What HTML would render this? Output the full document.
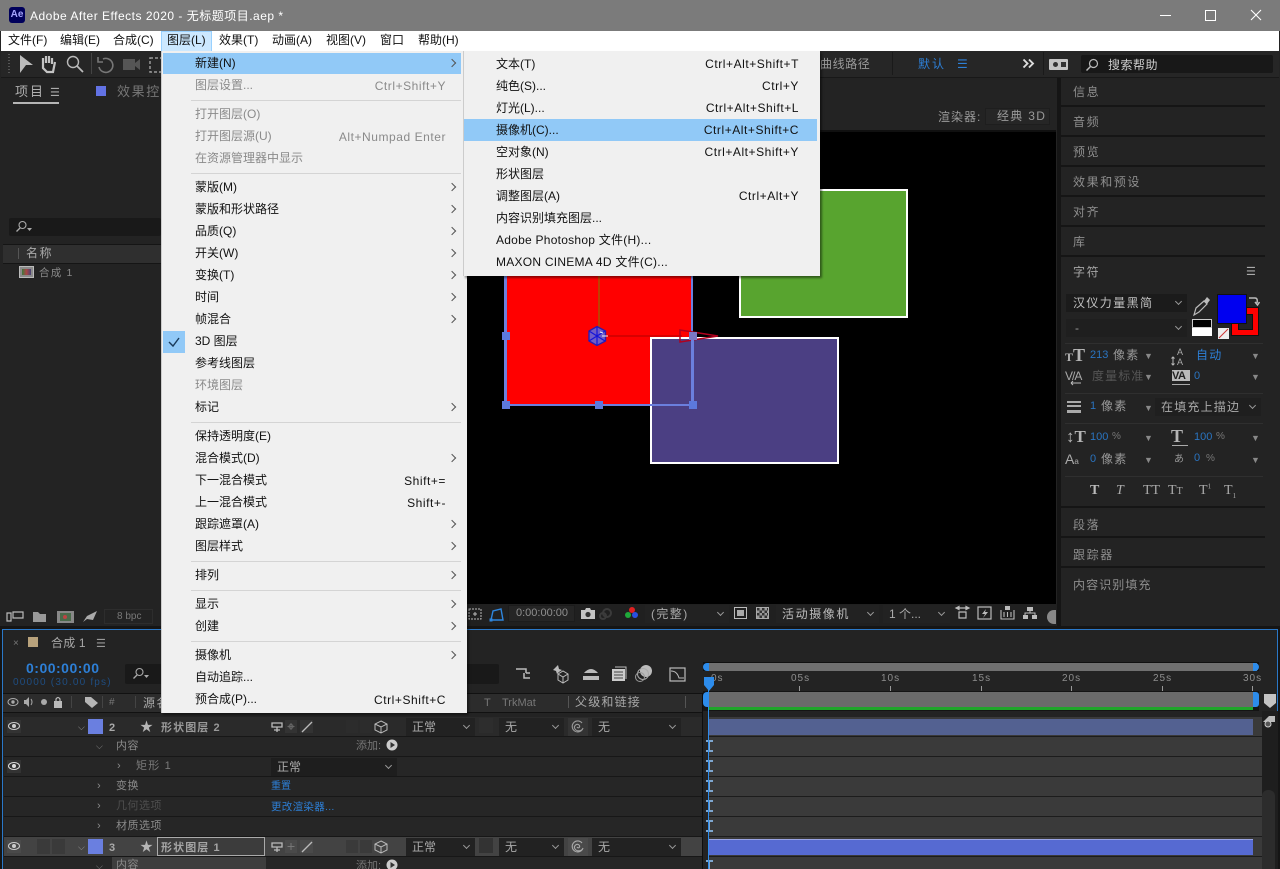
<!DOCTYPE html>
<html lang="zh"><head><meta charset="utf-8"><style>
html,body{margin:0;padding:0;background:#1d1d1d}
#p{position:relative;width:1280px;height:869px;overflow:hidden;background:#232323;font:12px/16px "Liberation Sans","Noto Sans CJK SC",sans-serif;color:#aaa}
#p div,#p span.a,#p svg{position:absolute}
.t{position:absolute;white-space:nowrap}
.m{position:absolute;white-space:nowrap;color:#111;font-size:12px;line-height:16px;left:195px}
.s{position:absolute;white-space:nowrap;color:#111;font-size:12px;line-height:16px;left:496px;margin-top:1px}
.g{color:#8a8a8a!important}
.k{position:absolute;white-space:nowrap;color:#111;text-align:right;line-height:16px;letter-spacing:.55px;margin-top:1px}
.ar{position:absolute;left:449px;width:5px;height:5px;border-top:1px solid #555;border-right:1px solid #555;transform:rotate(45deg)}
.sep{position:absolute;left:191px;width:270px;height:1px;background:#d4d4d4}
.pn{position:absolute;left:1073px;color:#8e8e8e;letter-spacing:1.6px;line-height:16px;white-space:nowrap;margin-top:1px}
.pl{position:absolute;left:1061px;width:204px;height:2px;background:#151515}
.b{color:#2d8ceb}
.row{position:absolute;left:4px;width:698px;height:19px;background:#262626;border-bottom:1px solid #171717}
.tr{position:absolute;left:709px;width:553px;height:19px;background:#3a3a3a;border-bottom:1px solid #1c1c1c}
.dd{position:absolute;height:18px;background:#1f1f1f;color:#aaa;line-height:18px;padding-left:6px;box-sizing:border-box}
.dd i{position:absolute;right:6px;top:5px;width:4px;height:4px;border-right:1px solid #999;border-bottom:1px solid #999;transform:rotate(45deg)}
.ib{position:absolute;left:706px;width:7px;height:12px;border-top:2px solid #7ea6cf;border-bottom:2px solid #7ea6cf;box-sizing:border-box}
.ib:after{content:"";position:absolute;left:2px;top:0;width:2px;height:8px;background:#7ea6cf}
.tk{position:absolute;color:#8e8e8e;font-size:10px;top:672px;letter-spacing:1px;line-height:14px}
.tc{position:absolute;top:686px;width:1px;height:5px;background:#999}
.sq{position:absolute;background:#2a2a2a;width:13px;height:15px}
.h{position:absolute;width:8px;height:8px;background:#5c79dd}
</style></head><body><div id="p">

<!-- title -->
<div style="left:0;top:0;width:1280px;height:31px;background:#7b7b7b"></div>
<div style="left:9px;top:7px;width:16px;height:16px;background:#00005b;border-radius:3px"></div>
<span class="t" style="left:9px;top:7px;width:16px;text-align:center;color:#a6a6ff;font-size:10px;font-weight:bold">Ae</span>
<span class="t" style="left:30px;top:8px;color:#fff;font-size:12px;letter-spacing:.5px">Adobe After Effects 2020 - 无标题项目.aep *</span>
<div style="left:1160px;top:15px;width:11px;height:1px;background:#fff"></div>
<div style="left:1205px;top:10px;width:9px;height:9px;border:1px solid #fff"></div>
<svg style="left:1250px;top:9px" width="12" height="12"><path d="M1 1L11 11M11 1L1 11" stroke="#fff" stroke-width="1.1"/></svg>

<!-- menubar -->
<div style="left:1px;top:31px;width:1278px;height:20px;background:#fff"></div>
<div style="left:161px;top:31px;width:51px;height:20px;background:#cce8ff;border:1px solid #99d1ff;border-bottom:0;box-sizing:border-box"></div>
<span class="t" style="left:8px;top:32px;color:#111">文件(F)</span>
<span class="t" style="left:60px;top:32px;color:#111">编辑(E)</span>
<span class="t" style="left:113px;top:32px;color:#111">合成(C)</span>
<span class="t" style="left:167px;top:32px;color:#111">图层(L)</span>
<span class="t" style="left:219px;top:32px;color:#111">效果(T)</span>
<span class="t" style="left:272px;top:32px;color:#111">动画(A)</span>
<span class="t" style="left:326px;top:32px;color:#111">视图(V)</span>
<span class="t" style="left:380px;top:32px;color:#111">窗口</span>
<span class="t" style="left:418px;top:32px;color:#111">帮助(H)</span>

<!-- toolbar -->
<div style="left:1px;top:51px;width:1278px;height:26px;background:#262626;border-bottom:2px solid #181818"></div>
<div style="left:8px;top:54px;width:2px;height:19px;background:repeating-linear-gradient(#555 0 1px,transparent 1px 3px)"></div>
<div style="left:91px;top:53px;width:1px;height:21px;background:#444"></div>
<svg style="left:18px;top:53px" width="145" height="22" fill="none">
<path d="M2 2L15 12L8 12L2 20Z" fill="#bbb"/>
<path d="M25 11L25 5M28 10L28 3M31 10L31 3M34 11L34 5M25 9L25 15L29 19L35 19L37 9" stroke="#c4c4c4" stroke-width="2.2"/>
<circle cx="55" cy="9" r="5.5" stroke="#bbb" stroke-width="1.4"/><path d="M59 13L65 19" stroke="#bbb" stroke-width="1.8"/>
<path d="M85 6A7 7 0 1 1 81 14M80 4L80 9L85 9" stroke="#777" stroke-width="1.6"/>
<rect x="105" y="6" width="12" height="11" fill="#555"/><path d="M117 10L122 6V17L117 13Z" fill="#555"/>
<path d="M132 5H146V19H132Z" stroke="#999" stroke-dasharray="3 2" stroke-width="1.5"/>
</svg>
<span class="t" style="left:820px;top:56px;color:#9a9a9a;letter-spacing:.6px">曲线路径</span>
<div style="left:892px;top:52px;width:1px;height:23px;background:#1a1a1a"></div>
<span class="t" style="left:918px;top:56px;color:#2d7fd6;letter-spacing:2px">默认</span>
<span class="t" style="left:957px;top:56px;color:#2d7fd6">☰</span>
<svg style="left:1022px;top:58px" width="13" height="11" fill="none"><path d="M1.500 1.500L5.500 5.500L1.500 9.500M7 1.500L11 5.500L7 9.500" stroke="#ddd" stroke-width="1.900"/></svg>
<div style="left:1043px;top:52px;width:1px;height:23px;background:#1a1a1a"></div>
<div style="left:1049px;top:59px;width:19px;height:11px;background:#c4c4c4;border-radius:1px"></div>
<div style="left:1053px;top:62px;width:5px;height:5px;background:#333;border-radius:3px"></div>
<div style="left:1061px;top:62px;width:5px;height:5px;background:#333"></div>
<div style="left:1081px;top:55px;width:192px;height:18px;background:#181818;border-radius:2px"></div>
<svg style="left:1085px;top:58px" width="14" height="14" fill="none"><circle cx="8.500" cy="5.500" r="4" stroke="#bbb" stroke-width="1.200"/><path d="M5.500 8.500L1.500 12.500" stroke="#bbb" stroke-width="1.500"/></svg>
<span class="t" style="left:1108px;top:57px;color:#ccc;letter-spacing:.5px">搜索帮助</span>

<!-- project panel -->
<div style="left:1px;top:78px;width:160px;height:527px;background:#232323"></div>
<span class="t" style="left:15px;top:84px;color:#b0b0b0;letter-spacing:2px;font-size:13px">项目</span>
<span class="t" style="left:50px;top:85px;color:#aaa;font-size:11px">☰</span>
<div style="left:13px;top:102px;width:46px;height:2px;background:#b5b5b5"></div>
<div style="left:96px;top:86px;width:10px;height:10px;background:#6272e4"></div>
<span class="t" style="left:117px;top:84px;color:#777;letter-spacing:1.600px;width:44px;overflow:hidden;font-size:13px">效果控件</span>
<div style="left:9px;top:218px;width:152px;height:18px;background:#191919;border-radius:2px"></div>
<svg style="left:14px;top:220px" width="20" height="14" fill="none"><circle cx="8.500" cy="5" r="3.500" stroke="#aaa" stroke-width="1.100"/><path d="M6 8L2.500 11.500" stroke="#aaa" stroke-width="1.300"/><path d="M13 8H18L15.500 11Z" fill="#aaa"/></svg>
<div style="left:3px;top:244px;width:158px;height:18px;background:#2f2f2f;border-top:1px solid #151515;border-bottom:1px solid #151515"></div>
<div style="left:18px;top:248px;width:1px;height:11px;background:#555"></div>
<span class="t" style="left:26px;top:245px;color:#aaa;letter-spacing:1.500px">名称</span>
<div style="left:19px;top:266px;width:15px;height:12px;background:#8a8a8a;border:1px solid #bbb;box-sizing:border-box"></div>
<div style="left:22px;top:269px;width:9px;height:6px;background:linear-gradient(90deg,#3c7a3c,#a44,#447)"></div>
<span class="t" style="left:39px;top:265px;color:#8a8a8a;font-size:10.500px;letter-spacing:1.200px">合成 1</span>
<!-- project bottom -->
<svg style="left:5px;top:609px" width="100" height="15" fill="none">
<path d="M2 4H6V12H2ZM8 3H18V9H8ZM2 4" stroke="#bbb" stroke-width="1.200"/>
<path d="M28 3H33L35 5H41V13H28Z" fill="#999"/>
<rect x="52" y="2" width="17" height="12" fill="#888"/><rect x="55" y="4" width="11" height="8" fill="#4a6a4a"/><circle cx="60" cy="8" r="2" fill="#b44"/>
<path d="M78 13L82 7L92 2L88 11L82 10Z" fill="#aaa"/>
</svg>
<div style="left:104px;top:609px;width:49px;height:15px;border:1px solid #2d2d2d;box-sizing:border-box"></div>
<span class="t" style="left:117px;top:609px;color:#787878;font-size:10px">8 bpc</span>

<!-- composition -->
<div style="left:162px;top:78px;width:895px;height:55px;background:#232323"></div>
<span class="t" style="left:938px;top:109px;color:#9a9a9a;letter-spacing:1px">渲染器:</span>
<div style="left:985px;top:108px;width:65px;height:17px;background:#262626;border:1px solid #1e1e1e;box-sizing:border-box"></div>
<span class="t" style="left:997px;top:108px;color:#999;letter-spacing:1.300px">经典 3D</span>
<div style="left:162px;top:130px;width:894px;height:2px;background:#101010"></div>
<div style="left:162px;top:132px;width:894px;height:473px;background:#000"></div>
<div style="left:739px;top:189px;width:169px;height:129px;background:#58a42f;border:2px solid #fff;box-sizing:border-box"></div>
<div style="left:505px;top:260px;width:188px;height:145px;background:#f00"></div>
<div style="left:504px;top:260px;width:3px;height:146px;background:#6b7fdd"></div>
<div style="left:691px;top:260px;width:2px;height:78px;background:#6b7fdd"></div>
<div style="left:650px;top:337px;width:189px;height:127px;background:#4b3f83;border:2px solid #fff;box-sizing:border-box"></div>
<svg style="left:590px;top:270px;overflow:visible" width="135" height="80" fill="none">
<path d="M9 0V60" stroke="#7f7f00" stroke-width="1"/>
<path d="M14 66H92" stroke="#b00000" stroke-width="1"/>
<path d="M90 60L90 72L128 66Z" stroke="#b0001e" stroke-width="1.500"/>
<path d="M7 56.500L15.500 61V71L7 75.500L-1 71V61Z" fill="#6f5cc8" stroke="#2a1cb0" stroke-width="1.400"/>
<path d="M7 57V75M-1 61L15 71M15 61L-1 71" stroke="#1414d8" stroke-width="1.200"/>
<path d="M10 62L13 63M12 66H18" stroke="#eee" stroke-width="1"/>
</svg>
<div style="left:504px;top:404px;width:190px;height:2px;background:#6b7fdd"></div>
<div style="left:691px;top:337px;width:3px;height:68px;background:#6b7fdd"></div>
<div class="h" style="left:502px;top:332px"></div>
<div class="h" style="left:502px;top:401px"></div>
<div class="h" style="left:595px;top:401px"></div>
<div class="h" style="left:689px;top:401px"></div>
<div class="h" style="left:689px;top:332px;background:#7a78c4"></div>
<!-- comp bottom bar -->
<div style="left:467px;top:604px;width:590px;height:25px;background:#202020"></div>
<svg style="left:468px;top:606px" width="50" height="20" fill="none">
<path d="M1 3H13V13H1Z" stroke="#bbb" stroke-dasharray="2 1"/><path d="M5 8H9M7 6V10" stroke="#bbb"/>
<path d="M23 14L25 5L33 3L35 14Z" stroke="#2e86de" stroke-width="1.400"/><rect x="21.500" y="12.500" width="3" height="3" fill="#2e86de"/>
</svg>
<div style="left:508px;top:605px;width:67px;height:17px;background:#252525;border:1px solid #1c1c1c;box-sizing:border-box"></div>
<span class="t" style="left:516px;top:605px;color:#8f8f8f;font-size:11px">0:00:00:00</span>
<svg style="left:580px;top:606px" width="60" height="18">
<path d="M1 4H5L6 2H10L11 4H15V13H1Z" fill="#c4c4c4"/><circle cx="8" cy="8.500" r="2.600" fill="#333"/>
<circle cx="27" cy="7" r="4" fill="none" stroke="#3b3b3b" stroke-width="2"/><circle cx="23" cy="10" r="3" fill="none" stroke="#3b3b3b" stroke-width="2"/>
<circle cx="52" cy="4" r="3" fill="#e02020"/><circle cx="48" cy="9" r="3" fill="#1fa83a"/><circle cx="55" cy="9" r="3" fill="#2a50e0"/>
</svg>
<div class="dd" style="left:645px;top:605px;width:84px;height:18px;background:#222;color:#a9a9a9;letter-spacing:1.400px">(完整)<i></i></div>
<div style="left:734px;top:607px;width:13px;height:12px;border:1.500px solid #bbb;box-sizing:border-box"></div>
<div style="left:737px;top:610px;width:7px;height:6px;background:#aaa"></div>
<div style="left:756px;top:607px;width:13px;height:12px;border:1px solid #aaa;box-sizing:border-box;background:repeating-conic-gradient(#999 0 25%,#333 0 50%) 0 0/5px 5px"></div>
<div class="dd" style="left:776px;top:605px;width:103px;height:18px;background:#222;color:#bbb;letter-spacing:1.600px">活动摄像机<i></i></div>
<div class="dd" style="left:883px;top:605px;width:67px;height:18px;background:#222;color:#aaa">1 个...<i></i></div>
<svg style="left:954px;top:605px" width="90" height="20" fill="none" stroke="#bbb">
<path d="M2 3H15M2 3L5 1.500V4.500ZM15 3L12 1.500V4.500ZM5 7H12V13H5Z" stroke-width="1.200"/>
<rect x="24" y="2" width="13" height="12" stroke-width="1.200"/><path d="M32 4L28 9H31L29 13L34 7H31Z" fill="#bbb" stroke="none"/>
<path d="M47 5V14H60V5M50 7V12M53.500 7V12M57 7V12" stroke-width="1.100"/><rect x="51" y="1" width="5" height="4" fill="#bbb" stroke="none"/>
<path d="M73 2H79V6H73ZM69 10H74V14H69ZM78 10H83V14H78Z" fill="#bbb" stroke="none"/><path d="M76 6V8H71V10M76 8H81V10"/>
</svg>
<div style="left:1047px;top:610px;width:9px;height:14px;background:#888;border-radius:7px 0 0 7px"></div>

<!-- right panels -->
<div style="left:1057px;top:78px;width:4px;height:548px;background:#151515"></div>
<div style="left:1061px;top:78px;width:219px;height:548px;background:#232323"></div>
<span class="pn" style="top:83px">信息</span><div class="pl" style="top:105px"></div>
<span class="pn" style="top:113px">音频</span><div class="pl" style="top:135px"></div>
<span class="pn" style="top:143px">预览</span><div class="pl" style="top:165px"></div>
<span class="pn" style="top:173px">效果和预设</span><div class="pl" style="top:195px"></div>
<span class="pn" style="top:203px">对齐</span><div class="pl" style="top:225px"></div>
<span class="pn" style="top:233px">库</span><div class="pl" style="top:255px"></div>
<span class="pn" style="top:263px;color:#a6a6a6">字符</span>
<span class="t" style="left:1246px;top:264px;color:#aaa;font-size:11px">☰</span>

<div class="dd" style="left:1066px;top:294px;width:121px;height:18px;color:#c0c0c0;letter-spacing:1.400px;padding-left:7px;background:#1b1b1b">汉仪力量黑简<i></i></div>
<div class="dd" style="left:1066px;top:319px;width:121px;height:18px;background:#1f1f1f;color:#999;padding-left:9px">-<i></i></div>
<svg style="left:1192px;top:295px" width="20" height="22" fill="none"><path d="M2 20L4 13L12 6L15 9L7 17Z" stroke="#bbb" stroke-width="1.200"/><path d="M12 6L15 2L18 5L15 9Z" fill="#bbb"/></svg>
<div style="left:1192px;top:319px;width:20px;height:9px;background:#000;border:1px solid #ccc;box-sizing:border-box"></div>
<div style="left:1192px;top:328px;width:20px;height:8px;background:#fff"></div>
<div style="left:1218px;top:328px;width:11px;height:11px;background:#eee"></div>
<svg style="left:1218px;top:328px" width="11" height="11"><path d="M1 10L10 1" stroke="#c33" stroke-width="1"/></svg>
<div style="left:1231px;top:307px;width:28px;height:29px;background:#f00;border:1px solid #111;box-sizing:border-box"></div>
<div style="left:1238px;top:314px;width:13px;height:14px;background:#222;border:1px solid #111"></div>
<div style="left:1217px;top:294px;width:30px;height:30px;background:#0000f0;border:1px solid #111;box-sizing:border-box"></div>
<svg style="left:1247px;top:295px" width="13" height="13" fill="none"><path d="M2 3H8Q11 3 10 8M8 7L10.500 10L12.500 7" stroke="#bbb" stroke-width="1.500"/></svg>
<div style="left:1065px;top:343px;width:198px;height:1px;background:#2f2f2f"></div>

<span class="t" style="left:1065px;top:345px;color:#b5b5b5;font:bold 18px/20px 'Liberation Serif',serif"><span style="font-size:12px">T</span>T</span>
<span class="t b" style="left:1090px;top:347px;color:#2a74c0;font-size:11px">213</span>
<span class="t" style="left:1113px;top:347px;color:#999;letter-spacing:1.300px">像素</span>
<span class="t" style="left:1144px;top:348px;color:#888;font-size:9px">▼</span>
<svg style="left:1170px;top:347px" width="20" height="20" fill="none"><path d="M3 10V18M1.500 11.500L3 10L4.500 11.500M1.500 16.500L3 18L4.500 16.500" stroke="#bbb"/><text x="7" y="8" font-size="9" fill="#aaa" font-family="Liberation Sans">A</text><text x="7" y="18" font-size="9" fill="#aaa" font-family="Liberation Sans">A</text></svg>
<span class="t" style="left:1196px;top:347px;color:#2d7fd6;letter-spacing:1.300px">自动</span>
<span class="t" style="left:1251px;top:348px;color:#888;font-size:9px">▼</span>
<span class="t" style="left:1065px;top:368px;color:#aaa;font-size:12px;letter-spacing:-1px">V/A</span>
<svg style="left:1065px;top:380px" width="18" height="6" fill="none"><path d="M16 3H6M6 3L8 1M6 3L8 5" stroke="#bbb"/></svg>
<span class="t" style="left:1092px;top:368px;color:#555;letter-spacing:1.100px">度量标准</span>
<span class="t" style="left:1144px;top:369px;color:#888;font-size:9px">▼</span>
<div style="left:1172px;top:370px;width:18px;height:11px;background:#bbb"></div>
<span class="t" style="left:1172px;top:368px;color:#222;font-size:11px;font-weight:bold;letter-spacing:-.5px">VA</span>
<div style="left:1172px;top:384px;width:18px;height:1px;background:#aaa"></div>
<span class="t b" style="left:1194px;top:368px;color:#2a74c0;font-size:11px">0</span>
<span class="t" style="left:1251px;top:369px;color:#888;font-size:9px">▼</span>
<div style="left:1065px;top:393px;width:198px;height:1px;background:#2f2f2f"></div>
<div style="left:1067px;top:401px;width:14px;height:2px;background:#aaa"></div>
<div style="left:1067px;top:405px;width:14px;height:2px;background:#aaa"></div>
<div style="left:1067px;top:410px;width:14px;height:3px;background:#aaa"></div>
<span class="t b" style="left:1090px;top:398px;color:#2a74c0;font-size:11px">1</span>
<span class="t" style="left:1101px;top:398px;color:#999;letter-spacing:1.300px">像素</span>
<span class="t" style="left:1144px;top:400px;color:#888;font-size:9px">▼</span>
<div class="dd" style="left:1155px;top:398px;width:106px;height:18px;background:#1f1f1f;color:#aaa;letter-spacing:1.200px">在填充上描边<i></i></div>
<div style="left:1065px;top:423px;width:198px;height:1px;background:#2f2f2f"></div>

<span class="t" style="left:1066px;top:426px;color:#b5b5b5;font:bold 17px/22px 'Liberation Serif',serif">↕T</span>
<span class="t b" style="left:1090px;top:429px;color:#2a74c0;font-size:11px">100</span>
<span class="t" style="left:1112px;top:429px;color:#777;font-size:10px">%</span>
<span class="t" style="left:1144px;top:430px;color:#888;font-size:9px">▼</span>
<span class="t" style="left:1171px;top:425px;color:#b5b5b5;font:bold 18px/22px 'Liberation Serif',serif">T</span>
<div style="left:1172px;top:445px;width:16px;height:1px;background:#aaa"></div>
<span class="t b" style="left:1194px;top:429px;color:#2a74c0;font-size:11px">100</span>
<span class="t" style="left:1216px;top:429px;color:#777;font-size:10px">%</span>
<span class="t" style="left:1251px;top:430px;color:#888;font-size:9px">▼</span>
<span class="t" style="left:1065px;top:451px;color:#aaa;font-size:14px">A<span style="font-size:8px">a</span></span>
<span class="t b" style="left:1090px;top:451px;color:#2a74c0;font-size:11px">0</span>
<span class="t" style="left:1101px;top:451px;color:#999;letter-spacing:1.300px">像素</span>
<span class="t" style="left:1144px;top:452px;color:#888;font-size:9px">▼</span>
<span class="t" style="left:1174px;top:452px;color:#999;font-size:10px">あ</span>
<span class="t b" style="left:1194px;top:450px;color:#2a74c0;font-size:11px">0</span>
<span class="t" style="left:1206px;top:451px;color:#777;font-size:10px">%</span>
<span class="t" style="left:1251px;top:452px;color:#888;font-size:9px">▼</span>
<div style="left:1065px;top:476px;width:198px;height:1px;background:#2f2f2f"></div>
<span class="t" style="left:1090px;top:482px;color:#bbb;font:bold 14px/18px 'Liberation Serif',serif">T</span>
<span class="t" style="left:1116px;top:482px;color:#aaa;font:italic 14px/18px 'Liberation Serif',serif">T</span>
<span class="t" style="left:1143px;top:482px;color:#aaa;font:14px/18px 'Liberation Serif',serif">TT</span>
<span class="t" style="left:1168px;top:482px;color:#aaa;font:14px/18px 'Liberation Serif',serif">T<span style="font-size:10px">T</span></span>
<span class="t" style="left:1199px;top:482px;color:#aaa;font:14px/18px 'Liberation Serif',serif">T<sup style="font-size:7px;line-height:0">1</sup></span>
<span class="t" style="left:1224px;top:482px;color:#aaa;font:14px/18px 'Liberation Serif',serif">T<sub style="font-size:7px;line-height:0">1</sub></span>
<div class="pl" style="top:506px"></div>
<span class="pn" style="top:516px">段落</span><div class="pl" style="top:536px"></div>
<span class="pn" style="top:546px">跟踪器</span><div class="pl" style="top:566px"></div>
<span class="pn" style="top:576px;letter-spacing:1.100px">内容识别填充</span>

<!-- timeline -->
<div style="left:0;top:626px;width:1280px;height:243px;background:#151515"></div>
<div style="left:2px;top:629px;width:1276px;height:240px;background:#232323;border:1px solid #2a78c8;border-bottom:0;box-sizing:border-box"></div>
<span class="t" style="left:13px;top:636px;color:#777;font-size:10px">×</span>
<div style="left:28px;top:637px;width:10px;height:10px;background:#b8a27c"></div>
<span class="t" style="left:51px;top:635px;color:#a8a8a8;letter-spacing:.2px">合成 1</span>
<span class="t" style="left:96px;top:636px;color:#999;font-size:11px">☰</span>
<span class="t" style="left:26px;top:660px;color:#2d7fd6;font-size:14px;font-weight:bold;letter-spacing:.5px">0:00:00:00</span>
<span class="t" style="left:13px;top:675px;color:#1f4d80;font-size:10px;letter-spacing:1.200px">00000 (30.00 fps)</span>
<div style="left:125px;top:664px;width:374px;height:20px;background:#191919;border-radius:2px"></div>
<svg style="left:131px;top:667px" width="20" height="14" fill="none"><circle cx="8.500" cy="5" r="3.500" stroke="#aaa" stroke-width="1.100"/><path d="M6 8L2.500 11.500" stroke="#aaa" stroke-width="1.300"/><path d="M13 8H18L15.500 11Z" fill="#aaa"/></svg>
<svg style="left:512px;top:664px" width="180" height="20" fill="none">
<path d="M4 5H9M9 5L14 5V9M14 9H18M12 9V14H18" stroke="#bbb" stroke-width="1.500"/>
<path d="M44 3L46 1L47 5L50 6L47 8L45 10L44 7L41 6Z" fill="#bbb"/><path d="M46 10L51 7L56 10V16L51 19L46 16ZM46 10L51 13L56 10M51 13V19" stroke="#bbb"/>
<path d="M72 9Q79 1 86 9ZM79 9V15M71 12H87V16H71Z" fill="#bbb"/>
<path d="M100 5H113V17H100Z" fill="#ccc"/><path d="M103 3H114V15" stroke="#bbb"/><path d="M102 8H111M102 11H111M102 14H111" stroke="#444"/>
<circle cx="134" cy="7" r="6" fill="#bbb"/><circle cx="131" cy="10" r="5.500" stroke="#aaa"/><circle cx="128" cy="13" r="4.500" stroke="#999"/>
<rect x="158" y="4" width="15" height="13" stroke="#bbb" stroke-width="1.200"/><path d="M159 7Q165 7 167 14H172" stroke="#bbb"/>
</svg>

<!-- header row -->
<div style="left:3px;top:693px;width:700px;height:18px;background:#2c2c2c;border-top:1px solid #111;border-bottom:1px solid #111"></div>
<svg style="left:7px;top:695px" width="135" height="15" fill="none">
<ellipse cx="6" cy="7" rx="5" ry="3.500" stroke="#aaa"/><circle cx="6" cy="7" r="1.700" fill="#aaa"/>
<path d="M17 5H19L22 2V12L19 9H17Z" fill="#aaa"/><path d="M24 4Q26 7 24 10" stroke="#aaa"/>
<circle cx="37" cy="7" r="3" fill="#aaa"/>
<rect x="47" y="6" width="8" height="7" fill="#bbb"/><path d="M49 6V4Q51 1 53 4V6" stroke="#bbb" stroke-width="1.200"/>
<path d="M78 2H84L91 8L85 13L78 7Z" fill="#b5b5b5"/>
</svg>
<div style="left:71px;top:696px;width:1px;height:12px;background:#444"></div>
<div style="left:102px;top:696px;width:1px;height:12px;background:#444"></div>
<span class="t" style="left:109px;top:695px;color:#777;font-size:10px">#</span>
<div style="left:135px;top:696px;width:1px;height:12px;background:#444"></div>
<span class="t" style="left:143px;top:695px;color:#aaa;letter-spacing:1.400px">源名称</span>
<span class="t" style="left:484px;top:695px;color:#777;font-size:11px">T</span>
<span class="t" style="left:502px;top:695px;color:#777;font-size:11px">TrkMat</span>
<div style="left:568px;top:696px;width:1px;height:12px;background:#555"></div>
<span class="t" style="left:575px;top:694px;color:#a8a8a8;letter-spacing:1.200px">父级和链接</span>
<div style="left:685px;top:696px;width:1px;height:12px;background:#555"></div>
<div style="left:702px;top:693px;width:1px;height:176px;background:#0d0d0d"></div>

<!-- left rows -->
<div class="row" style="top:717px;background:#2a2a2a"></div>
<div class="row" style="top:737px"></div>
<div class="row" style="top:757px"></div>
<div class="row" style="top:777px"></div>
<div class="row" style="top:797px"></div>
<div class="row" style="top:817px"></div>
<div class="row" style="top:837px;background:#434343"></div>
<div class="row" style="top:857px;height:12px;border:0"></div>
<div style="left:112px;top:857px;width:154px;height:12px;background:#3e3e3e"></div>

<svg style="left:7px;top:720px" width="15" height="13" fill="none"><rect width="14" height="13" fill="#333"/><ellipse cx="7" cy="6" rx="5.500" ry="3.500" stroke="#ccc"/><circle cx="7" cy="6" r="2" fill="#ccc"/></svg>
<svg style="left:7px;top:760px" width="15" height="13" fill="none"><rect width="14" height="13" fill="#333"/><ellipse cx="7" cy="6" rx="5.500" ry="3.500" stroke="#ddd"/><circle cx="7" cy="6" r="2" fill="#ddd"/></svg>
<svg style="left:7px;top:840px" width="15" height="13" fill="none"><rect width="14" height="13" fill="#4a4a4a"/><ellipse cx="7" cy="6" rx="5.500" ry="3.500" stroke="#ccc"/><circle cx="7" cy="6" r="2" fill="#ccc"/></svg>
<div class="sq" style="left:37px;top:719px"></div><div class="sq" style="left:52px;top:719px"></div>
<div class="sq" style="left:37px;top:839px;background:#3a3a3a"></div><div class="sq" style="left:52px;top:839px;background:#3a3a3a"></div>
<div style="left:88px;top:719px;width:15px;height:15px;background:#6a7fe0"></div>
<div style="left:88px;top:839px;width:15px;height:15px;background:#6a7fe0"></div>
<span class="t" style="left:78px;top:719px;color:#999;font-size:9px">⌵</span>
<span class="t" style="left:78px;top:839px;color:#999;font-size:9px">⌵</span>
<span class="t" style="left:109px;top:720px;color:#aaa;font-size:11px;font-weight:bold">2</span>
<span class="t" style="left:109px;top:840px;color:#aaa;font-size:11px;font-weight:bold">3</span>
<span class="t" style="left:140px;top:719px;color:#b5b5b5;font-size:13px">★</span>
<span class="t" style="left:140px;top:839px;color:#b5b5b5;font-size:13px">★</span>
<span class="t" style="left:161px;top:720px;color:#999;font-size:11px;font-weight:bold;letter-spacing:1.100px">形状图层 2</span>
<div style="left:157px;top:837px;width:108px;height:19px;background:#3c3c3c;border:1px solid #aaa;box-sizing:border-box"></div>
<span class="t" style="left:161px;top:840px;color:#a5a5a5;font-size:11px;font-weight:bold;letter-spacing:1.100px">形状图层 1</span>
<span class="t" style="left:96px;top:738px;color:#888;font-size:9px">⌵</span>
<span class="t" style="left:116px;top:738px;color:#8a8a8a;font-size:11px;letter-spacing:.5px">内容</span>
<span class="t" style="left:117px;top:758px;color:#888;font-size:11px">›</span>
<span class="t" style="left:136px;top:758px;color:#7a7a7a;font-size:11px;letter-spacing:1.200px">矩形 1</span>
<span class="t" style="left:97px;top:778px;color:#888;font-size:11px">›</span>
<span class="t" style="left:116px;top:778px;color:#8a8a8a;font-size:11px;letter-spacing:.5px">变换</span>
<span class="t" style="left:97px;top:798px;color:#888;font-size:11px">›</span>
<span class="t" style="left:116px;top:798px;color:#4e4e4e;font-size:11px;letter-spacing:.5px">几何选项</span>
<span class="t" style="left:97px;top:818px;color:#888;font-size:11px">›</span>
<span class="t" style="left:116px;top:818px;color:#8a8a8a;font-size:11px;letter-spacing:.5px">材质选项</span>
<span class="t" style="left:96px;top:858px;color:#888;font-size:9px">⌵</span>
<span class="t" style="left:116px;top:857px;color:#8a8a8a;font-size:11px;letter-spacing:.5px">内容</span>
<span class="t" style="left:356px;top:738px;color:#777;font-size:11px">添加:</span>
<span class="t" style="left:356px;top:858px;color:#777;font-size:11px">添加:</span>
<svg style="left:386px;top:739px" width="12" height="12"><circle cx="6" cy="6" r="5.500" fill="#ccc"/><path d="M4.500 3L9 6L4.500 9Z" fill="#333"/></svg>
<svg style="left:386px;top:859px" width="12" height="12"><circle cx="6" cy="6" r="5.500" fill="#ccc"/><path d="M4.500 3L9 6L4.500 9Z" fill="#333"/></svg>
<div class="dd" style="left:271px;top:758px;width:126px;height:18px;background:#1e1e1e;color:#aaa">正常<i></i></div>
<span class="t" style="left:271px;top:779px;color:#2d7fd6;font-size:10px">重置</span>
<span class="t" style="left:271px;top:799px;color:#2d7fd6;font-size:10.500px;letter-spacing:.3px">更改渲染器...</span>

<svg style="left:270px;top:719px" width="130" height="16" fill="none">
<path d="M2 4H12V8H2ZM7 8V13M4 11H10" stroke="#bbb" stroke-width="1.300"/>
<rect x="15" y="1" width="12" height="13" fill="#333"/><path d="M21 4V11M17.500 7.500H24.500" stroke="#666"/><circle cx="21" cy="7.500" r="2" stroke="#666"/>
<rect x="30" y="1" width="13" height="13" fill="#333"/><path d="M32 13L42 3" stroke="#bbb" stroke-width="1.300"/>
<rect x="76" y="1" width="12" height="13" fill="#2c2c2c"/><rect x="90" y="1" width="12" height="13" fill="#2c2c2c"/>
<path d="M111 2L117 5V11L111 14L105 11V5ZM105 5L111 8L117 5M111 8V14" stroke="#bbb"/>
</svg>
<svg style="left:270px;top:839px" width="130" height="16" fill="none">
<path d="M2 4H12V8H2ZM7 8V13M4 11H10" stroke="#bbb" stroke-width="1.300"/>
<rect x="15" y="1" width="12" height="13" fill="#4a4a4a"/><path d="M21 4V11M17.500 7.500H24.500" stroke="#777"/>
<rect x="30" y="1" width="13" height="13" fill="#4a4a4a"/><path d="M32 13L42 3" stroke="#bbb" stroke-width="1.300"/>
<rect x="76" y="1" width="12" height="13" fill="#3a3a3a"/><rect x="90" y="1" width="12" height="13" fill="#3a3a3a"/>
<path d="M111 2L117 5V11L111 14L105 11V5ZM105 5L111 8L117 5M111 8V14" stroke="#bbb"/>
</svg>
<div class="dd" style="left:406px;top:718px;width:69px;background:#222">正常<i></i></div>
<div class="dd" style="left:406px;top:838px;width:69px;background:#222">正常<i></i></div>
<div style="left:479px;top:718px;width:14px;height:15px;background:#2d2d2d"></div>
<div style="left:479px;top:838px;width:14px;height:15px;background:#333"></div>
<div class="dd" style="left:499px;top:718px;width:65px;background:#222">无<i></i></div>
<div class="dd" style="left:499px;top:838px;width:65px;background:#222">无<i></i></div>
<svg style="left:568px;top:718px" width="20" height="18" fill="none"><rect width="20" height="18" fill="#333"/><path d="M14 5A5.500 5.500 0 1 0 15 10C14 13 9 14 7 11C5 8 9 5 11 7C13 9 10 11 9 9" stroke="#999" stroke-width="1.100"/></svg>
<svg style="left:568px;top:838px" width="20" height="18" fill="none"><rect width="20" height="18" fill="#4a4a4a"/><path d="M14 5A5.500 5.500 0 1 0 15 10C14 13 9 14 7 11C5 8 9 5 11 7C13 9 10 11 9 9" stroke="#aaa" stroke-width="1.100"/></svg>
<div class="dd" style="left:592px;top:718px;width:89px;background:#222">无<i></i></div>
<div class="dd" style="left:592px;top:838px;width:89px;background:#222">无<i></i></div>

<!-- timeline right -->
<div style="left:703px;top:662px;width:556px;height:9px;background:#111"></div>
<div style="left:707px;top:663px;width:550px;height:8px;background:#707070"></div>
<div style="left:703px;top:663px;width:6px;height:8px;background:#2d8ceb;border-radius:4px 0 0 4px"></div>
<div style="left:1253px;top:663px;width:6px;height:8px;background:#2d8ceb;border-radius:0 4px 4px 0"></div>
<span class="tk" style="left:711px">0s</span>
<span class="tk" style="left:791px">05s</span>
<span class="tk" style="left:881px">10s</span>
<span class="tk" style="left:972px">15s</span>
<span class="tk" style="left:1062px">20s</span>
<span class="tk" style="left:1153px">25s</span>
<span class="tk" style="left:1243px">30s</span>
<div class="tc" style="left:799px"></div><div class="tc" style="left:890px"></div><div class="tc" style="left:981px"></div><div class="tc" style="left:1071px"></div><div class="tc" style="left:1162px"></div><div class="tc" style="left:1252px"></div>
<div style="left:703px;top:691px;width:556px;height:20px;background:#141414"></div>
<div style="left:708px;top:692px;width:545px;height:15px;background:#6a6a6a"></div>
<div style="left:708px;top:707px;width:545px;height:3px;background:#1fa52a"></div>
<div style="left:703px;top:692px;width:6px;height:15px;background:#2d8ceb;border-radius:4px 0 0 4px"></div>
<div style="left:1253px;top:692px;width:6px;height:15px;background:#2d8ceb;border-radius:0 3px 3px 0"></div>
<svg style="left:1263px;top:693px" width="14" height="16"><path d="M1 1H13V10L7 15L1 10Z" fill="#c4c4c4"/></svg>
<div class="tr" style="top:717px"></div>
<div class="tr" style="top:737px"></div><div class="tr" style="top:757px"></div><div class="tr" style="top:777px"></div><div class="tr" style="top:797px"></div><div class="tr" style="top:817px"></div>
<div class="tr" style="top:837px"></div>
<div class="tr" style="top:857px;height:12px;border:0"></div>
<div style="left:709px;top:719px;width:544px;height:16px;background:#536191"></div>
<div style="left:709px;top:839px;width:544px;height:16px;background:#566ad2;border-top:1px solid #9aa4e4;box-sizing:border-box"></div>
<div style="left:1262px;top:711px;width:16px;height:158px;background:#1e1e1e"></div>
<div style="left:1262px;top:790px;width:13px;height:79px;background:#2c2c2c;border-radius:6px 6px 0 0"></div>
<svg style="left:1261px;top:713px" width="16" height="16"><path d="M2 9L8 3H14V9H7Z" fill="#bbb"/><circle cx="7" cy="11" r="3" fill="#555" stroke="#ccc"/></svg>
<div class="ib" style="top:740px"></div><div class="ib" style="top:760px"></div><div class="ib" style="top:780px"></div><div class="ib" style="top:800px"></div><div class="ib" style="top:820px"></div><div class="ib" style="top:860px"></div>
<div style="left:708px;top:690px;width:1px;height:179px;background:#2d8ceb"></div>
<svg style="left:703px;top:676px" width="12" height="16"><path d="M1 1H11V9L6 15L1 9Z" fill="#2d8ceb"/></svg>

<!-- layer menu -->
<div style="left:161px;top:51px;width:306px;height:662px;background:#f0f0f0;border-left:1px solid #ccc;box-sizing:border-box;box-shadow:2px 2px 2px rgba(0,0,0,.4)"></div>
<div style="left:163px;top:53px;width:298px;height:21px;background:#91c9f7"></div>
<div style="left:163px;top:331px;width:22px;height:22px;background:#91c9f7"></div>
<svg style="left:167px;top:335px" width="14" height="14" fill="none"><path d="M2 7L6 11L12 3" stroke="#1a3a5a" stroke-width="1.400"/></svg>
<div class="sep" style="top:100px"></div><div class="sep" style="top:173px"></div><div class="sep" style="top:422px"></div><div class="sep" style="top:561px"></div><div class="sep" style="top:590px"></div><div class="sep" style="top:641px"></div>
<span class="m" style="top:55px">新建(N)</span>
<span class="m g" style="top:77px">图层设置...</span>
<span class="m g" style="top:106px">打开图层(O)</span>
<span class="m g" style="top:128px">打开图层源(U)</span>
<span class="m g" style="top:150px">在资源管理器中显示</span>
<span class="m" style="top:179px">蒙版(M)</span>
<span class="m" style="top:201px">蒙版和形状路径</span>
<span class="m" style="top:223px">品质(Q)</span>
<span class="m" style="top:245px">开关(W)</span>
<span class="m" style="top:267px">变换(T)</span>
<span class="m" style="top:289px">时间</span>
<span class="m" style="top:311px">帧混合</span>
<span class="m" style="top:333px">3D 图层</span>
<span class="m" style="top:355px">参考线图层</span>
<span class="m g" style="top:377px">环境图层</span>
<span class="m" style="top:399px">标记</span>
<span class="m" style="top:428px">保持透明度(E)</span>
<span class="m" style="top:450px">混合模式(D)</span>
<span class="m" style="top:472px">下一混合模式</span>
<span class="m" style="top:494px">上一混合模式</span>
<span class="m" style="top:516px">跟踪遮罩(A)</span>
<span class="m" style="top:538px">图层样式</span>
<span class="m" style="top:567px">排列</span>
<span class="m" style="top:596px">显示</span>
<span class="m" style="top:618px">创建</span>
<span class="m" style="top:647px">摄像机</span>
<span class="m" style="top:669px">自动追踪...</span>
<span class="m" style="top:691px">预合成(P)...</span>
<span class="k g" style="right:834px;top:77px">Ctrl+Shift+Y</span>
<span class="k g" style="right:834px;top:128px">Alt+Numpad Enter</span>
<span class="k" style="right:834px;top:472px">Shift+=</span>
<span class="k" style="right:834px;top:494px">Shift+-</span>
<span class="k" style="right:834px;top:691px">Ctrl+Shift+C</span>
<i class="ar" style="top:60px"></i><i class="ar" style="top:184px"></i><i class="ar" style="top:206px"></i><i class="ar" style="top:228px"></i><i class="ar" style="top:250px"></i><i class="ar" style="top:272px"></i><i class="ar" style="top:294px"></i><i class="ar" style="top:316px"></i><i class="ar" style="top:404px"></i><i class="ar" style="top:455px"></i><i class="ar" style="top:521px"></i><i class="ar" style="top:543px"></i><i class="ar" style="top:572px"></i><i class="ar" style="top:601px"></i><i class="ar" style="top:623px"></i><i class="ar" style="top:652px"></i>

<!-- submenu -->
<div style="left:463px;top:51px;width:357px;height:225px;background:#f0f0f0;border-left:1px solid #ccc;box-sizing:border-box;box-shadow:2px 2px 2px rgba(0,0,0,.45)"></div>
<div style="left:464px;top:119px;width:353px;height:22px;background:#91c9f7"></div>
<span class="s" style="top:55px">文本(T)</span>
<span class="s" style="top:77px">纯色(S)...</span>
<span class="s" style="top:99px">灯光(L)...</span>
<span class="s" style="top:121px">摄像机(C)...</span>
<span class="s" style="top:143px">空对象(N)</span>
<span class="s" style="top:165px">形状图层</span>
<span class="s" style="top:187px">调整图层(A)</span>
<span class="s" style="top:209px">内容识别填充图层...</span>
<span class="s" style="top:231px;letter-spacing:.25px">Adobe Photoshop 文件(H)...</span>
<span class="s" style="top:253px;letter-spacing:.25px">MAXON CINEMA 4D 文件(C)...</span>
<span class="k" style="right:481px;top:55px">Ctrl+Alt+Shift+T</span>
<span class="k" style="right:481px;top:77px">Ctrl+Y</span>
<span class="k" style="right:481px;top:99px">Ctrl+Alt+Shift+L</span>
<span class="k" style="right:481px;top:121px">Ctrl+Alt+Shift+C</span>
<span class="k" style="right:481px;top:143px">Ctrl+Alt+Shift+Y</span>
<span class="k" style="right:481px;top:187px">Ctrl+Alt+Y</span>

</div></body></html>
